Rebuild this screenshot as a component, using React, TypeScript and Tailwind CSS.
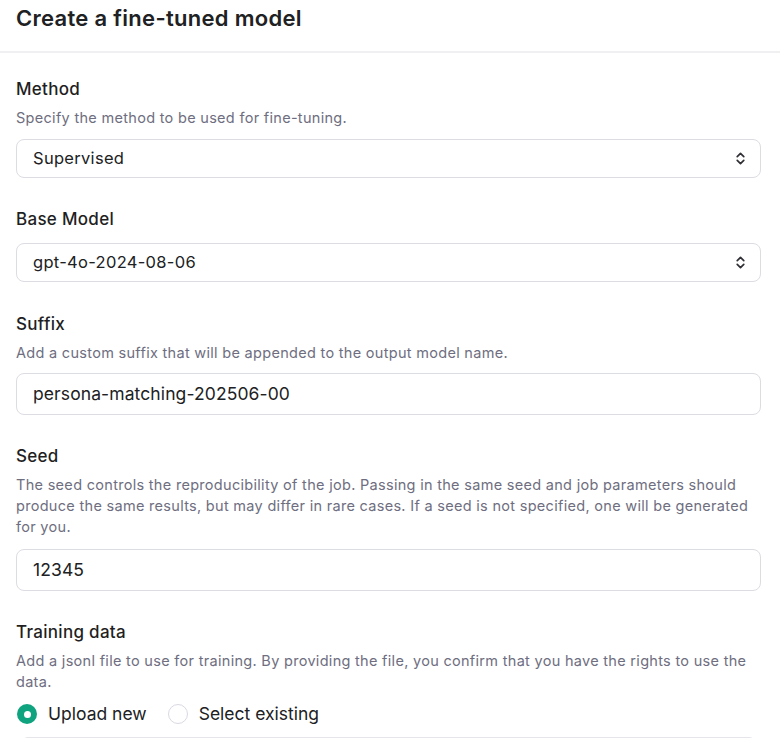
import React from "react";

const Chevrons = () => (
  <svg width="15" height="15" viewBox="0 0 16 16" fill="none" stroke="#2f2f35" strokeWidth="1.8" strokeLinecap="round" strokeLinejoin="round">
    <path d="M4.5 6 L8 2.5 L11.5 6" />
    <path d="M4.5 10 L8 13.5 L11.5 10" />
  </svg>
);

function Label({ children }: { children: React.ReactNode }) {
  return <div className="text-[17px] leading-6 font-medium text-[#1f1f23] tracking-[0.3px]">{children}</div>;
}
function Desc({ children }: { children: React.ReactNode }) {
  return <div className="mt-[6px] text-[14.5px] leading-[21px] text-[#6e6e80] tracking-[0.3px]">{children}</div>;
}

export default function App() {
  return (
    <div className="w-[780px] h-[738px] overflow-hidden bg-white" style={{ fontFamily: "Inter, 'Noto Sans', sans-serif" }}>
      <div className="h-[53px] border-b-2 border-[#f0f0f3] pl-4 pt-[4px]">
        <h1 className="text-[22px] leading-[28px] font-semibold text-[#202123] tracking-[0.3px]">Create a fine-tuned model</h1>
      </div>
      <div className="pl-4 pr-[19px] pt-[24px] flex flex-col gap-[29px]">
        <section>
          <Label>Method</Label>
          <Desc>Specify the method to be used for fine-tuning.</Desc>
          <div className="mt-[11px] h-[39px] rounded-lg border border-[#dcdce3] flex items-center justify-between pl-4 pr-3">
            <span className="text-[16.5px] text-[#202123] tracking-[0.3px]">Supervised</span>
            <Chevrons />
          </div>
        </section>
        <section>
          <Label>Base Model</Label>
          <div className="mt-[12px] h-[39px] rounded-lg border border-[#dcdce3] flex items-center justify-between pl-4 pr-3">
            <span className="text-[16.5px] text-[#202123] tracking-[0.3px]">gpt-4o-2024-08-06</span>
            <Chevrons />
          </div>
        </section>
        <section className="pt-[1px]">
          <Label>Suffix</Label>
          <Desc>Add a custom suffix that will be appended to the output model name.</Desc>
          <div className="mt-[10px] h-[42px] rounded-lg border border-[#dcdce3] flex items-center pl-4">
            <span className="text-[17.5px] text-[#202123] tracking-[0.1px]">persona-matching-202506-00</span>
          </div>
        </section>
        <section>
          <Label>Seed</Label>
          <Desc>
            The seed controls the reproducibility of the job. Passing in the same seed and job parameters should produce the same results, but may differ in rare cases. If a seed is not specified, one will be generated for you.
          </Desc>
          <div className="mt-[12px] h-[42px] rounded-lg border border-[#dcdce3] flex items-center pl-4">
            <span className="text-[17.5px] text-[#202123] tracking-[0.1px]">12345</span>
          </div>
        </section>
        <section>
          <Label>Training data</Label>
          <Desc>
            Add a jsonl file to use for training. By providing the file, you confirm that you have the rights to use the data.
          </Desc>
          <div className="mt-[9px] flex items-center">
            <span className="w-5 h-5 rounded-full bg-[#10a37f] flex items-center justify-center ml-[1px]">
              <span className="w-[7px] h-[7px] rounded-full bg-white" />
            </span>
            <span className="ml-[11px] text-[17.5px] text-[#202123]">Upload new</span>
            <span className="ml-[21px] w-5 h-5 rounded-full border border-[#d9d9e3] bg-white" />
            <span className="ml-[11px] text-[17.5px] text-[#202123]">Select existing</span>
          </div>
          <div className="mt-[10px] mx-1 h-[60px] rounded-lg border border-[#e5e5ea] bg-[#fafafb]" />
        </section>
      </div>
    </div>
  );
}
